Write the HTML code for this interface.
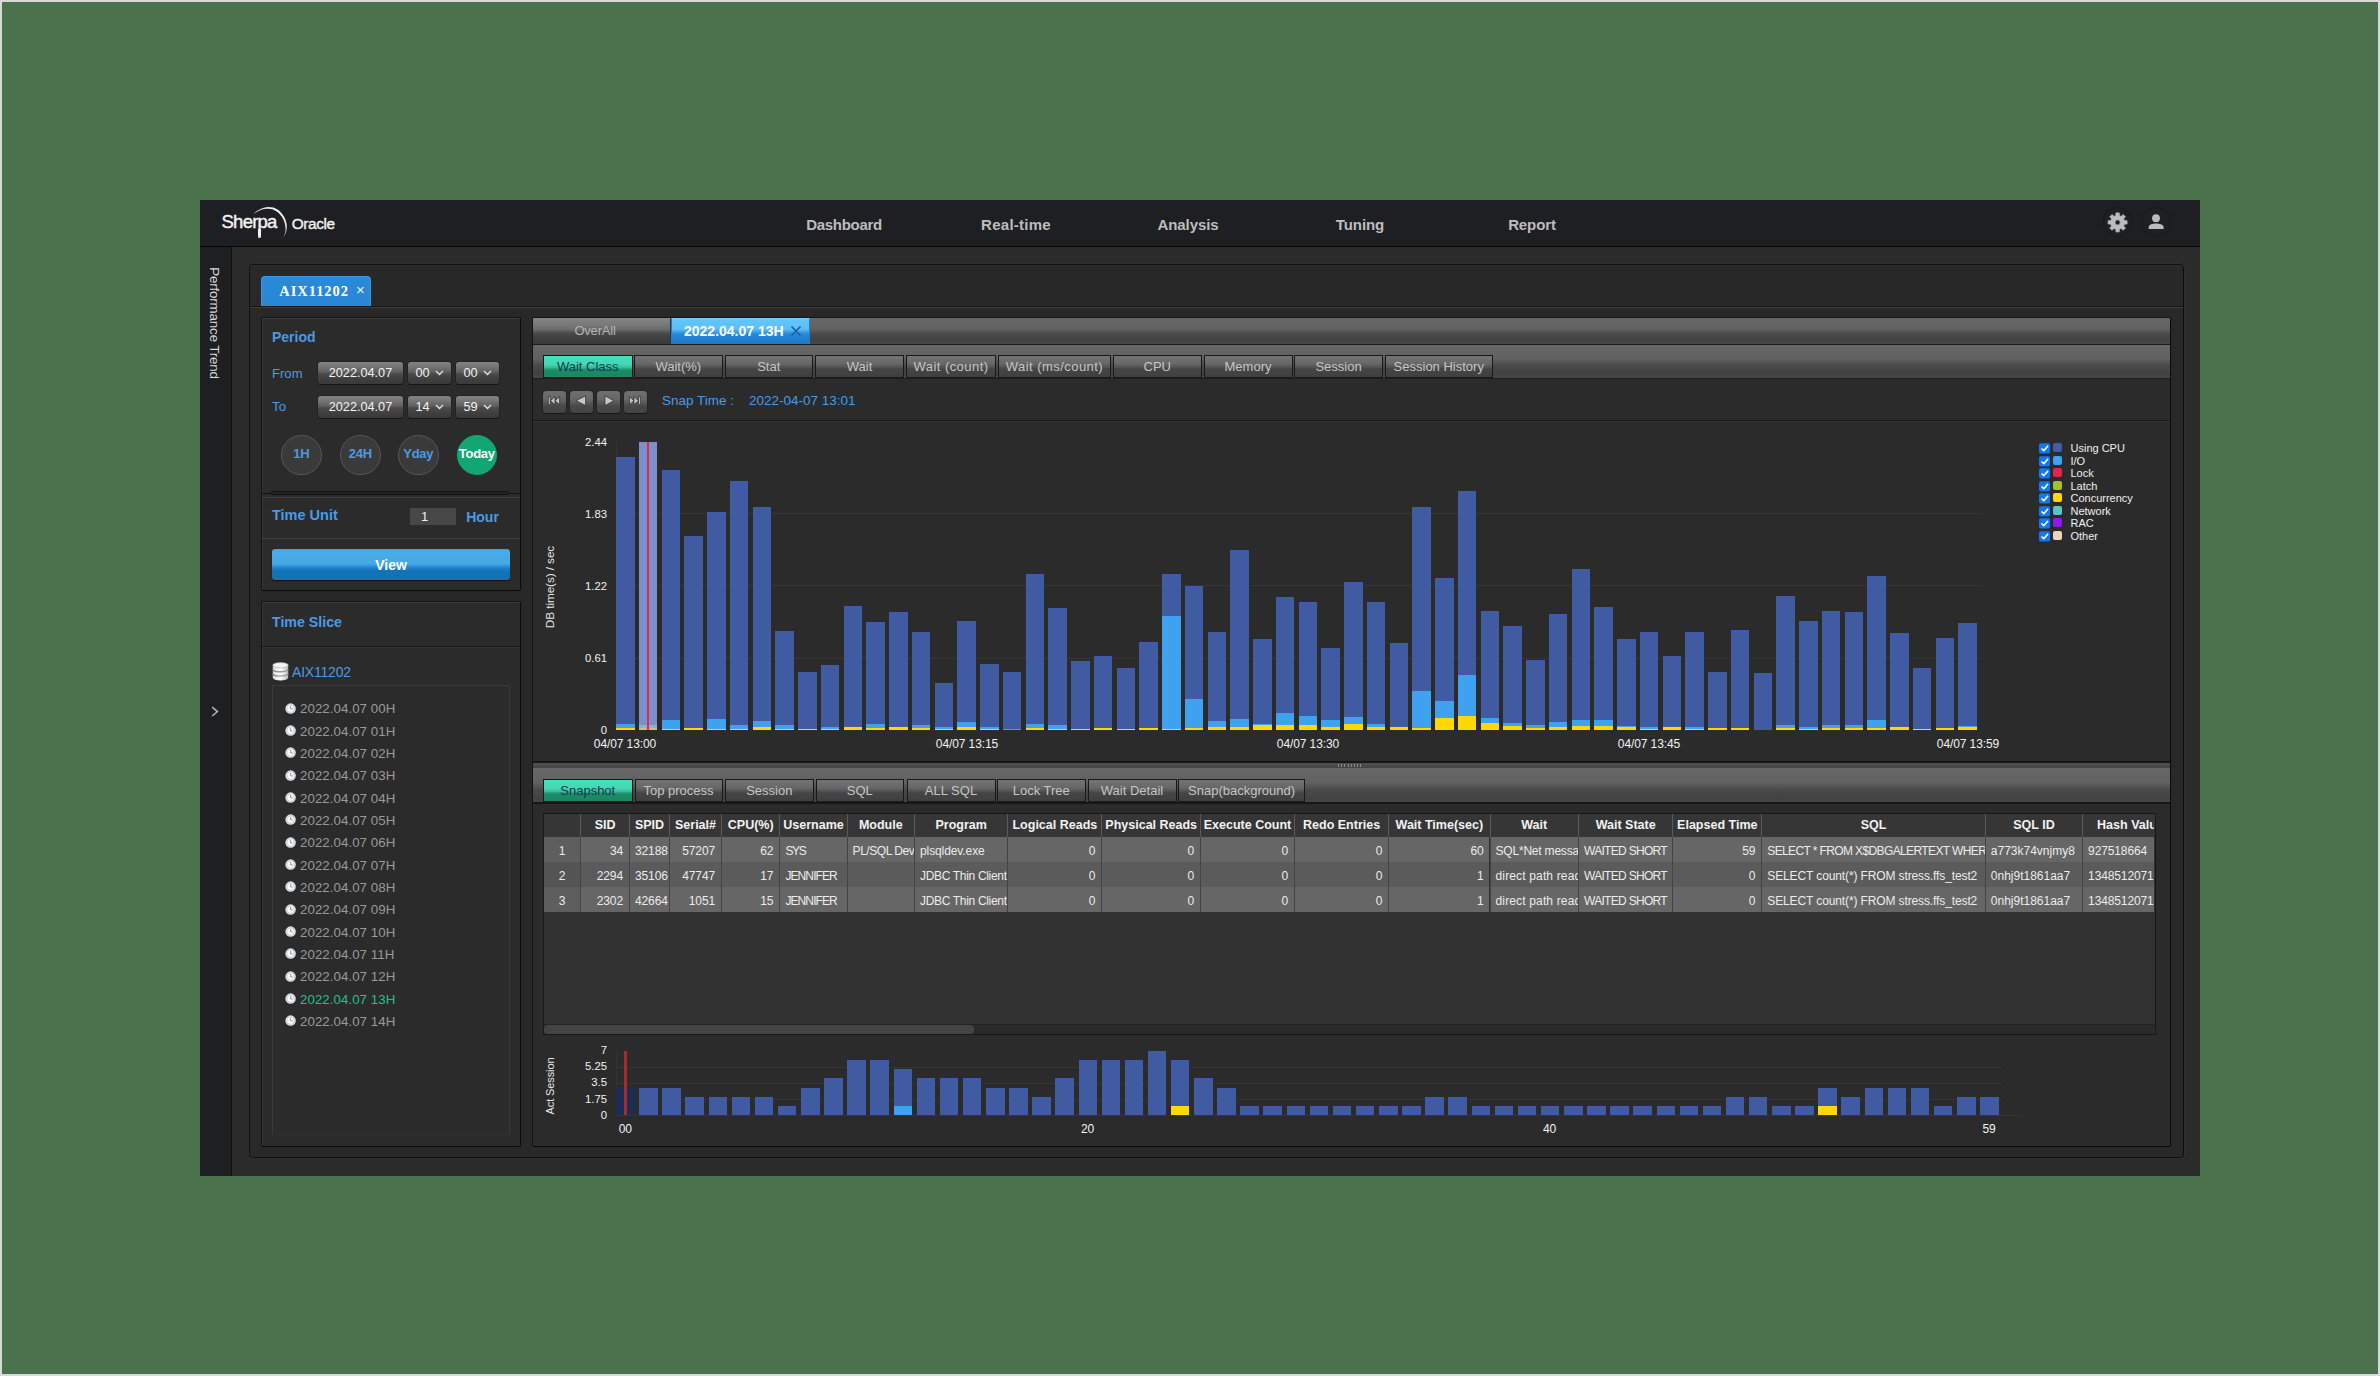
<!DOCTYPE html>
<html><head><meta charset="utf-8"><title>Sherpa Oracle</title>
<style>
html,body{margin:0;padding:0}
body{width:2380px;height:1376px;background:#4a734d;position:relative;overflow:hidden;font-family:"Liberation Sans",sans-serif;font-size:12px;color:#e6e6e6}
div{position:absolute;box-sizing:border-box}
svg{position:absolute;overflow:visible}
.t{white-space:nowrap;height:20px;line-height:20px}
.c{text-align:center}
.r{text-align:right}
.b{font-weight:bold}
.blue{color:#4a9ae6}
.strip{background:linear-gradient(#666 0%,#626262 40%,#4a4a4a 62%,#424242 85%,#474747 100%)}
.tab{border:1px solid #181818;background:linear-gradient(#747474 0%,#686868 35%,#585858 50%,#454545 62%,#404040 100%);color:#c6c6c6;text-align:center;font-size:13px;line-height:21px;white-space:nowrap;overflow:hidden;box-shadow:none}
.tab.on{background:linear-gradient(#46dfbb 0%,#42d8b3 40%,#34bc98 55%,#1d8c68 66%,#1b8664 100%);color:#143a50;box-shadow:none}
.inp{background:linear-gradient(#848484 0%,#727272 25%,#5e5e5e 46%,#4a4a4a 54%,#3e3e3e 80%,#3a3a3a 100%);border:none;border-radius:3px;color:#f4f4f4;font-size:12.7px;line-height:23.6px;text-align:center;box-shadow:0 1px 0 #151515,0 0 0 0.5px #1c1c1c}
.circ{border-radius:50%;background:#3b3a3a;border:1px solid #565656;color:#4a9ae6;font-weight:bold;font-size:13px;text-align:center;line-height:36.4px;letter-spacing:-0.3px}
.th{color:#f2f2f2;font-weight:bold;font-size:12.5px;text-align:center;line-height:22px;white-space:nowrap;overflow:hidden;border-left:1px solid #5a5a5a;height:23px}
.td{color:#ececec;font-size:12px;line-height:28.5px;white-space:nowrap;overflow:hidden;height:25px;border-left:1px solid #444}
.li{color:#9a9a9a;font-size:13.3px;letter-spacing:0.05px;margin-top:0.7px}
</style></head><body>

<div style="left:0px;top:0px;width:2380px;height:1376px;border:2px solid #d9d9d9;border-right-width:2px;border-bottom-width:2px"></div>
<div style="left:200px;top:200px;width:2000px;height:976px;background:#2b2b2b"></div>
<div style="left:200px;top:200px;width:2000px;height:46px;background:#1e1f23"></div>
<div style="left:200px;top:246px;width:2000px;height:1.3px;background:#050505"></div>
<div style="left:200px;top:247px;width:31px;height:929px;background:#1e1f23"></div>
<div style="left:231px;top:247px;width:1px;height:929px;background:#0e0e0e"></div>
<div class="t" style="left:221.5px;top:212.5px;font-size:18.5px;letter-spacing:-0.75px;color:#f4f4f2;-webkit-text-stroke:0.4px #f4f4f2;height:30px;line-height:30px;top:207px">Sherpa</div>
<div class="t" style="left:291.7px;top:213.5px;font-size:15.4px;letter-spacing:-0.4px;color:#f4f4f2;-webkit-text-stroke:0.35px #f4f4f2;height:30px;line-height:30px;top:209px">Oracle</div>
<svg style="left:240px;top:200px" width="60" height="46" viewBox="240 200 60 46"><defs><linearGradient id="lg" x1="0" y1="0" x2="1" y2="1"><stop offset="0" stop-color="#bdbdbd"/><stop offset="0.45" stop-color="#ffffff"/><stop offset="0.8" stop-color="#e8e8e8"/><stop offset="1" stop-color="#777"/></linearGradient></defs><path d="M253 214.6 C259 207.5 270 204.3 277.5 209.5 C286 215.5 290.5 228 283.2 237.8 C288.3 228 284.5 217 276.5 211.3 C269.5 206.6 259.5 209 253 214.6 Z" fill="url(#lg)"/></svg>
<div style="left:258px;top:229px;width:2.9px;height:9.3px;background:linear-gradient(#f4f4f2 70%,#c8c8c6);border-radius:0 0 1px 1px"></div>
<div class="t c" style="left:694px;top:214.5px;width:300px;font-weight:bold;font-size:15px;color:#bdbdbd;letter-spacing:-0.3px">Dashboard</div>
<div class="t c" style="left:866px;top:214.5px;width:300px;font-weight:bold;font-size:15px;color:#bdbdbd;letter-spacing:0.25px">Real-time</div>
<div class="t c" style="left:1038px;top:214.5px;width:300px;font-weight:bold;font-size:15px;color:#bdbdbd;letter-spacing:-0.1px">Analysis</div>
<div class="t c" style="left:1210px;top:214.5px;width:300px;font-weight:bold;font-size:15px;color:#bdbdbd;letter-spacing:-0.1px">Tuning</div>
<div class="t c" style="left:1382px;top:214.5px;width:300px;font-weight:bold;font-size:15px;color:#bdbdbd;letter-spacing:-0.1px">Report</div>
<svg style="left:2095px;top:200px" width="90" height="46" viewBox="2095 200 90 46"><circle cx="2117.5" cy="222" r="14.5" fill="none" stroke="#1a1b1e" stroke-width="1.2"/><circle cx="2156" cy="222" r="14.5" fill="none" stroke="#1a1b1e" stroke-width="1.2"/><path d="M2115.95 212.94 L2119.25 212.94 L2119.23 215.59 L2121.26 216.43 L2123.12 214.55 L2125.45 216.88 L2123.57 218.74 L2124.41 220.77 L2127.06 220.75 L2127.06 224.05 L2124.41 224.03 L2123.57 226.06 L2125.45 227.92 L2123.12 230.25 L2121.26 228.37 L2119.23 229.21 L2119.25 231.86 L2115.95 231.86 L2115.97 229.21 L2113.94 228.37 L2112.08 230.25 L2109.75 227.92 L2111.63 226.06 L2110.79 224.03 L2108.14 224.05 L2108.14 220.75 L2110.79 220.77 L2111.63 218.74 L2109.75 216.88 L2112.08 214.55 L2113.94 216.43 L2115.97 215.59 Z M2115.00 222.40 a2.6 2.6 0 1 0 5.2 0 a2.6 2.6 0 1 0 -5.2 0 Z" fill="#b9bdbb" fill-rule="evenodd" stroke="#b9bdbb" stroke-width="0.8" stroke-linejoin="round"/><circle cx="2156" cy="218.2" r="3.9" fill="#b9bdbb"/><path d="M2148.7 229 L2148.7 227.4 C2148.7 224.6 2153 223.6 2156 223.6 C2159 223.6 2163.6 224.6 2163.6 227.4 L2163.6 229 Z" fill="#b9bdbb"/></svg>
<div class="t" style="left:114px;top:313px;width:200px;text-align:center;transform:rotate(90deg);font-size:13.4px;color:#d8d8d8;letter-spacing:-0.18px">Performance Trend</div>
<svg style="left:210px;top:704px" width="12" height="16" viewBox="0 0 12 16"><path d="M2.2 3.2 L7.4 7.6 L2.2 12" fill="none" stroke="#b0b0b0" stroke-width="1.6"/></svg>
<div style="left:249px;top:264px;width:1935px;height:894px;background:#282828;border:1px solid #0f0f0f;border-radius:3.5px;box-shadow:0 0 0 1px #2f2f2f,inset 0 1px 0 #2e2e2e"></div>
<div style="left:261px;top:275.6px;width:110px;height:30.4px;background:linear-gradient(#2b8ad8,#2886d4);border-radius:4px 4px 0 0;border:1px solid #3a9aea;border-bottom:none"></div>
<div class="t" style="left:279.3px;top:281.3px;font-family:'Liberation Serif',serif;font-weight:bold;font-size:14.5px;color:#fff;letter-spacing:0.95px">AIX11202</div>
<div class="t" style="left:356px;top:280px;font-size:15px;color:#e8f2fc">&#215;</div>
<div style="left:250px;top:306px;width:1933px;height:1px;background:#161616"></div>
<div style="left:250px;top:307px;width:1933px;height:1px;background:#3c3c3c"></div>
<div style="left:261px;top:317.4px;width:260px;height:273.6px;background:#2b2b2b;border:1px solid #141414;border-bottom-color:#090909;border-right-color:#0b0b0b;border-radius:2px;box-shadow:inset 0 1px 0 #3d3d3d,inset 1px 0 0 #343434"></div>
<div class="t" style="left:272px;top:327px;font-weight:bold;font-size:14px;color:#4a9ae6">Period</div>
<div class="t" style="left:272px;top:363.5px;font-size:13.1px;color:#4a9ae6">From</div>
<div class="t" style="left:272px;top:397px;font-size:13.3px;color:#4a9ae6">To</div>
<div class="inp" style="left:318.3px;top:362.1px;width:84.4px;height:22.4px;">2022.04.07</div>
<div class="inp" style="left:407.8px;top:362.1px;width:43px;height:22.4px;text-align:left;padding-left:7.6px">00</div>
<svg style="left:435.3px;top:370.40000000000003px" width="9" height="6" viewBox="0 0 9 6"><path d="M1 1 L4.5 4.5 L8 1" fill="none" stroke="#e0e0e0" stroke-width="1.4"/></svg>
<div class="inp" style="left:455.9px;top:362.1px;width:43px;height:22.4px;text-align:left;padding-left:7.6px">00</div>
<svg style="left:483.4px;top:370.40000000000003px" width="9" height="6" viewBox="0 0 9 6"><path d="M1 1 L4.5 4.5 L8 1" fill="none" stroke="#e0e0e0" stroke-width="1.4"/></svg>
<div class="inp" style="left:318.3px;top:395.6px;width:84.4px;height:22.4px;">2022.04.07</div>
<div class="inp" style="left:407.8px;top:395.6px;width:43px;height:22.4px;text-align:left;padding-left:7.6px">14</div>
<svg style="left:435.3px;top:403.90000000000003px" width="9" height="6" viewBox="0 0 9 6"><path d="M1 1 L4.5 4.5 L8 1" fill="none" stroke="#e0e0e0" stroke-width="1.4"/></svg>
<div class="inp" style="left:455.9px;top:395.6px;width:43px;height:22.4px;text-align:left;padding-left:7.6px">59</div>
<svg style="left:483.4px;top:403.90000000000003px" width="9" height="6" viewBox="0 0 9 6"><path d="M1 1 L4.5 4.5 L8 1" fill="none" stroke="#e0e0e0" stroke-width="1.4"/></svg>
<div class="circ" style="left:281px;top:434.5px;width:40.5px;height:40.5px;">1H</div>
<div class="circ" style="left:340px;top:434.5px;width:40.5px;height:40.5px;">24H</div>
<div class="circ" style="left:398px;top:434.5px;width:40.5px;height:40.5px;">Yday</div>
<div class="circ" style="left:456.5px;top:434.5px;width:40.5px;height:40.5px;background:#11a672;border-color:#11a672;color:#fff">Today</div>
<div style="left:262px;top:493px;width:258px;height:1px;background:#141414"></div>
<div style="left:262px;top:496.6px;width:258px;height:1px;background:#3d3d3d"></div>
<div style="left:270.5px;top:490.8px;width:238px;height:4.6px;border-radius:2.3px;background:#242424;border:1px solid #121212"></div>
<div class="t" style="left:272px;top:505px;font-weight:bold;font-size:14.5px;color:#4a9ae6">Time Unit</div>
<div style="left:410px;top:508px;width:45.5px;height:17px;background:#474747"></div>
<div class="t" style="left:421px;top:506.5px;font-size:13px;color:#f0f0f0">1</div>
<div class="t" style="left:466.2px;top:506.5px;font-weight:bold;font-size:14px;color:#4a9ae6">Hour</div>
<div style="left:262px;top:538px;width:258px;height:1px;background:#414141"></div>
<div style="left:272px;top:548.5px;width:238px;height:31px;border-radius:3px;background:linear-gradient(#3a9fe2 0%,#47ade9 6%,#45a9e6 48%,#2b8fd8 56%,#1a7cc6 64%,#1272b6 72%,#1272b6 93%,#2a6cb0 100%);box-shadow:0 1px 1px #111"></div>
<div class="t c" style="left:241px;top:554.5px;width:300px;font-weight:bold;font-size:14px;color:#fff">View</div>
<div style="left:261px;top:601.4px;width:260px;height:545.6px;background:#2b2b2b;border:1px solid #141414;border-bottom-color:#090909;border-right-color:#0b0b0b;border-radius:2px;box-shadow:inset 0 1px 0 #3d3d3d,inset 1px 0 0 #343434"></div>
<div class="t" style="left:272px;top:611.5px;font-weight:bold;font-size:14.2px;color:#4a9ae6">Time Slice</div>
<div style="left:262px;top:646px;width:258px;height:1px;background:#161616"></div>
<div style="left:262px;top:647px;width:258px;height:1px;background:#363636"></div>
<svg style="left:272px;top:662px" width="17" height="19" viewBox="0 0 17 19"><defs><linearGradient id="dbg" x1="0" x2="1"><stop offset="0" stop-color="#d8d8d8"/><stop offset="0.5" stop-color="#ffffff"/><stop offset="1" stop-color="#b8b8b8"/></linearGradient></defs><path d="M0.8 3.2 L0.8 15.8 A7.7 2.6 0 0 0 16.2 15.8 L16.2 3.2 Z" fill="url(#dbg)"/><ellipse cx="8.5" cy="3.2" rx="7.7" ry="2.6" fill="#f4f4f4" stroke="#a8a8a8" stroke-width="0.6"/><path d="M0.8 7.2 A7.7 2.6 0 0 0 16.2 7.2 M0.8 11.4 A7.7 2.6 0 0 0 16.2 11.4" fill="none" stroke="#7d7d7d" stroke-width="1.2"/></svg>
<div class="t" style="left:292px;top:662px;font-size:14px;color:#4a9ae6;letter-spacing:-0.2px">AIX11202</div>
<div style="left:272px;top:685px;width:238px;height:450px;border:1px solid #3a3a3a;border-bottom-color:#2e2e2e"></div>
<svg style="left:284.6px;top:702.6px" width="11.2" height="11.2" viewBox="0 0 12 12"><circle cx="6" cy="6" r="5.6" fill="#dfe3e6"/><circle cx="6" cy="6" r="4.1" fill="#f7f9fa" stroke="#b4bcc2" stroke-width="0.7"/><path d="M6 3.2 L6 6.3 L8.4 6.3" fill="none" stroke="#8a949c" stroke-width="1"/></svg>
<div class="t li" style="left:300px;top:698.6px;">2022.04.07 00H</div>
<svg style="left:284.6px;top:724.9px" width="11.2" height="11.2" viewBox="0 0 12 12"><circle cx="6" cy="6" r="5.6" fill="#dfe3e6"/><circle cx="6" cy="6" r="4.1" fill="#f7f9fa" stroke="#b4bcc2" stroke-width="0.7"/><path d="M6 3.2 L6 6.3 L8.4 6.3" fill="none" stroke="#8a949c" stroke-width="1"/></svg>
<div class="t li" style="left:300px;top:720.9px;">2022.04.07 01H</div>
<svg style="left:284.6px;top:747.3px" width="11.2" height="11.2" viewBox="0 0 12 12"><circle cx="6" cy="6" r="5.6" fill="#dfe3e6"/><circle cx="6" cy="6" r="4.1" fill="#f7f9fa" stroke="#b4bcc2" stroke-width="0.7"/><path d="M6 3.2 L6 6.3 L8.4 6.3" fill="none" stroke="#8a949c" stroke-width="1"/></svg>
<div class="t li" style="left:300px;top:743.3px;">2022.04.07 02H</div>
<svg style="left:284.6px;top:769.6px" width="11.2" height="11.2" viewBox="0 0 12 12"><circle cx="6" cy="6" r="5.6" fill="#dfe3e6"/><circle cx="6" cy="6" r="4.1" fill="#f7f9fa" stroke="#b4bcc2" stroke-width="0.7"/><path d="M6 3.2 L6 6.3 L8.4 6.3" fill="none" stroke="#8a949c" stroke-width="1"/></svg>
<div class="t li" style="left:300px;top:765.6px;">2022.04.07 03H</div>
<svg style="left:284.6px;top:792.0px" width="11.2" height="11.2" viewBox="0 0 12 12"><circle cx="6" cy="6" r="5.6" fill="#dfe3e6"/><circle cx="6" cy="6" r="4.1" fill="#f7f9fa" stroke="#b4bcc2" stroke-width="0.7"/><path d="M6 3.2 L6 6.3 L8.4 6.3" fill="none" stroke="#8a949c" stroke-width="1"/></svg>
<div class="t li" style="left:300px;top:788.0px;">2022.04.07 04H</div>
<svg style="left:284.6px;top:814.3px" width="11.2" height="11.2" viewBox="0 0 12 12"><circle cx="6" cy="6" r="5.6" fill="#dfe3e6"/><circle cx="6" cy="6" r="4.1" fill="#f7f9fa" stroke="#b4bcc2" stroke-width="0.7"/><path d="M6 3.2 L6 6.3 L8.4 6.3" fill="none" stroke="#8a949c" stroke-width="1"/></svg>
<div class="t li" style="left:300px;top:810.3px;">2022.04.07 05H</div>
<svg style="left:284.6px;top:836.6px" width="11.2" height="11.2" viewBox="0 0 12 12"><circle cx="6" cy="6" r="5.6" fill="#dfe3e6"/><circle cx="6" cy="6" r="4.1" fill="#f7f9fa" stroke="#b4bcc2" stroke-width="0.7"/><path d="M6 3.2 L6 6.3 L8.4 6.3" fill="none" stroke="#8a949c" stroke-width="1"/></svg>
<div class="t li" style="left:300px;top:832.6px;">2022.04.07 06H</div>
<svg style="left:284.6px;top:859.0px" width="11.2" height="11.2" viewBox="0 0 12 12"><circle cx="6" cy="6" r="5.6" fill="#dfe3e6"/><circle cx="6" cy="6" r="4.1" fill="#f7f9fa" stroke="#b4bcc2" stroke-width="0.7"/><path d="M6 3.2 L6 6.3 L8.4 6.3" fill="none" stroke="#8a949c" stroke-width="1"/></svg>
<div class="t li" style="left:300px;top:855.0px;">2022.04.07 07H</div>
<svg style="left:284.6px;top:881.3px" width="11.2" height="11.2" viewBox="0 0 12 12"><circle cx="6" cy="6" r="5.6" fill="#dfe3e6"/><circle cx="6" cy="6" r="4.1" fill="#f7f9fa" stroke="#b4bcc2" stroke-width="0.7"/><path d="M6 3.2 L6 6.3 L8.4 6.3" fill="none" stroke="#8a949c" stroke-width="1"/></svg>
<div class="t li" style="left:300px;top:877.3px;">2022.04.07 08H</div>
<svg style="left:284.6px;top:903.7px" width="11.2" height="11.2" viewBox="0 0 12 12"><circle cx="6" cy="6" r="5.6" fill="#dfe3e6"/><circle cx="6" cy="6" r="4.1" fill="#f7f9fa" stroke="#b4bcc2" stroke-width="0.7"/><path d="M6 3.2 L6 6.3 L8.4 6.3" fill="none" stroke="#8a949c" stroke-width="1"/></svg>
<div class="t li" style="left:300px;top:899.7px;">2022.04.07 09H</div>
<svg style="left:284.6px;top:926.0px" width="11.2" height="11.2" viewBox="0 0 12 12"><circle cx="6" cy="6" r="5.6" fill="#dfe3e6"/><circle cx="6" cy="6" r="4.1" fill="#f7f9fa" stroke="#b4bcc2" stroke-width="0.7"/><path d="M6 3.2 L6 6.3 L8.4 6.3" fill="none" stroke="#8a949c" stroke-width="1"/></svg>
<div class="t li" style="left:300px;top:922.0px;">2022.04.07 10H</div>
<svg style="left:284.6px;top:948.3px" width="11.2" height="11.2" viewBox="0 0 12 12"><circle cx="6" cy="6" r="5.6" fill="#dfe3e6"/><circle cx="6" cy="6" r="4.1" fill="#f7f9fa" stroke="#b4bcc2" stroke-width="0.7"/><path d="M6 3.2 L6 6.3 L8.4 6.3" fill="none" stroke="#8a949c" stroke-width="1"/></svg>
<div class="t li" style="left:300px;top:944.3px;">2022.04.07 11H</div>
<svg style="left:284.6px;top:970.7px" width="11.2" height="11.2" viewBox="0 0 12 12"><circle cx="6" cy="6" r="5.6" fill="#dfe3e6"/><circle cx="6" cy="6" r="4.1" fill="#f7f9fa" stroke="#b4bcc2" stroke-width="0.7"/><path d="M6 3.2 L6 6.3 L8.4 6.3" fill="none" stroke="#8a949c" stroke-width="1"/></svg>
<div class="t li" style="left:300px;top:966.7px;">2022.04.07 12H</div>
<svg style="left:284.6px;top:993.0px" width="11.2" height="11.2" viewBox="0 0 12 12"><circle cx="6" cy="6" r="5.6" fill="#dfe3e6"/><circle cx="6" cy="6" r="4.1" fill="#f7f9fa" stroke="#b4bcc2" stroke-width="0.7"/><path d="M6 3.2 L6 6.3 L8.4 6.3" fill="none" stroke="#8a949c" stroke-width="1"/></svg>
<div class="t li" style="left:300px;top:989.0px;color:#20c18c;">2022.04.07 13H</div>
<svg style="left:284.6px;top:1015.4px" width="11.2" height="11.2" viewBox="0 0 12 12"><circle cx="6" cy="6" r="5.6" fill="#dfe3e6"/><circle cx="6" cy="6" r="4.1" fill="#f7f9fa" stroke="#b4bcc2" stroke-width="0.7"/><path d="M6 3.2 L6 6.3 L8.4 6.3" fill="none" stroke="#8a949c" stroke-width="1"/></svg>
<div class="t li" style="left:300px;top:1011.4px;">2022.04.07 14H</div>
<div style="left:532px;top:317px;width:1639px;height:830px;background:#2b2b2b;border:1px solid #131313;border-bottom-color:#080808;border-right-color:#0b0b0b;border-radius:2px"></div>
<div class="strip" style="left:533px;top:318px;width:1637px;height:26px;"></div>
<div style="left:533px;top:318px;width:138px;height:25.5px;background:linear-gradient(#848484 0%,#787878 28%,#686868 46%,#4a4a4a 58%,#3e3e3e 80%,#3a3a3a 100%);border-right:1px solid #333"></div>
<div class="t c" style="left:445px;top:321px;width:300px;font-size:13px;color:#b4b4b4;letter-spacing:-0.2px">OverAll</div>
<div style="left:671px;top:318px;width:138.5px;height:25.5px;background:linear-gradient(#64c6fb 0%,#5cbff7 40%,#3b9fe6 52%,#2487d8 62%,#1b79c8 100%);border:1px solid #2a7cc4;border-top-color:#7fd0ff;border-bottom:none"></div>
<div class="t" style="left:684px;top:321px;font-weight:bold;font-size:14px;color:#fff;letter-spacing:0px">2022.04.07 13H</div>
<svg style="left:790px;top:325px" width="12" height="12" viewBox="0 0 12 12"><path d="M1.5 1.5 L10.5 10.5 M10.5 1.5 L1.5 10.5" stroke="#1d5f9c" stroke-width="1.7" fill="none"/></svg>
<div style="left:533px;top:344px;width:1637px;height:1px;background:#1c1c1c"></div>
<div class="strip" style="left:533px;top:345px;width:1637px;height:33px;"></div>
<div style="left:533px;top:378px;width:1637px;height:1px;background:#1c1c1c"></div>
<div class="tab on" style="left:543px;top:355px;width:89.5px;height:23px;">Wait Class</div>
<div class="tab" style="left:634px;top:355px;width:88.5px;height:23px;">Wait(%)</div>
<div class="tab" style="left:724.5px;top:355px;width:88.5px;height:23px;">Stat</div>
<div class="tab" style="left:815px;top:355px;width:89px;height:23px;">Wait</div>
<div class="tab" style="left:906px;top:355px;width:90px;height:23px;letter-spacing:0.45px">Wait (count)</div>
<div class="tab" style="left:998px;top:355px;width:113px;height:23px;letter-spacing:0.45px">Wait (ms/count)</div>
<div class="tab" style="left:1113px;top:355px;width:88.5px;height:23px;">CPU</div>
<div class="tab" style="left:1203.5px;top:355px;width:89px;height:23px;">Memory</div>
<div class="tab" style="left:1294px;top:355px;width:89px;height:23px;">Session</div>
<div class="tab" style="left:1385px;top:355px;width:107.5px;height:23px;">Session History</div>
<div style="left:543.0px;top:390.5px;width:22.6px;height:22.6px;border:none;border-radius:3.5px;background:linear-gradient(#707070 0%,#666 40%,#565656 55%,#484848 70%,#444 100%);box-shadow:0 1px 0 #161616,0 0 0 0.5px #1e1e1e"><svg style="left:0;top:-0.5px" width="22" height="22" viewBox="0 0 22 22"><path d="M5.3 6.7 L7.3 6.7 L7.3 14.7 L5.3 14.7 Z M7.4 10.7 L12 6.7 L12 14.7 Z M12 10.7 L16.6 6.7 L16.6 14.7 Z" fill="#c6c6c6" stroke="#262626" stroke-width="0.7"/></svg></div>
<div style="left:570.0px;top:390.5px;width:22.6px;height:22.6px;border:none;border-radius:3.5px;background:linear-gradient(#707070 0%,#666 40%,#565656 55%,#484848 70%,#444 100%);box-shadow:0 1px 0 #161616,0 0 0 0.5px #1e1e1e"><svg style="left:0;top:-0.5px" width="22" height="22" viewBox="0 0 22 22"><path d="M6 10.7 L15.6 5.8 L15.6 15.6 Z" fill="#c6c6c6" stroke="#262626" stroke-width="0.7"/></svg></div>
<div style="left:597.1px;top:390.5px;width:22.6px;height:22.6px;border:none;border-radius:3.5px;background:linear-gradient(#707070 0%,#666 40%,#565656 55%,#484848 70%,#444 100%);box-shadow:0 1px 0 #161616,0 0 0 0.5px #1e1e1e"><svg style="left:0;top:-0.5px" width="22" height="22" viewBox="0 0 22 22"><path d="M16.8 10.7 L8 5.8 L8 15.6 Z" fill="#c6c6c6" stroke="#262626" stroke-width="0.7"/></svg></div>
<div style="left:624.1px;top:390.5px;width:22.6px;height:22.6px;border:none;border-radius:3.5px;background:linear-gradient(#707070 0%,#666 40%,#565656 55%,#484848 70%,#444 100%);box-shadow:0 1px 0 #161616,0 0 0 0.5px #1e1e1e"><svg style="left:0;top:-0.5px" width="22" height="22" viewBox="0 0 22 22"><path d="M16.6 6.7 L14.6 6.7 L14.6 14.7 L16.6 14.7 Z M14.5 10.7 L10 6.7 L10 14.7 Z M10 10.7 L5.6 6.7 L5.6 14.7 Z" fill="#c6c6c6" stroke="#262626" stroke-width="0.7"/></svg></div>
<div class="t" style="left:662px;top:390.5px;font-size:13.5px;color:#4a9ae6">Snap Time :</div>
<div class="t" style="left:749px;top:390.5px;font-size:13.5px;color:#4a9ae6">2022-04-07 13:01</div>
<div style="left:533px;top:420px;width:1637px;height:1px;background:#161616"></div>
<div style="left:533px;top:421px;width:1637px;height:1px;background:#333"></div>
<svg style="left:533px;top:422px" width="1637" height="340" viewBox="533 422 1637 340" shape-rendering="crispEdges"><rect x="616" y="513.3" width="1366" height="1" fill="#353535"/><rect x="616" y="585.4" width="1366" height="1" fill="#353535"/><rect x="616" y="657.5" width="1366" height="1" fill="#353535"/><rect x="616" y="441" width="1" height="289" fill="#333"/><rect x="616.20" y="457.0" width="18.3" height="272.6" fill="#405ba2"/><rect x="616.20" y="724.0" width="18.3" height="5.6" fill="#3ea2f0"/><rect x="616.20" y="727.6" width="18.3" height="2.0" fill="#ffd800"/><rect x="638.95" y="441.7" width="18.3" height="287.9" fill="#7b90ca"/><rect x="638.95" y="725.2" width="18.3" height="2.4" fill="#86b4d8"/><rect x="638.95" y="727.6" width="18.3" height="2" fill="#d8b48c"/><rect x="647.10" y="441.7" width="1.7" height="287.9" fill="#e0284c"/><rect x="661.70" y="470.1" width="18.3" height="259.5" fill="#405ba2"/><rect x="661.70" y="719.9" width="18.3" height="9.7" fill="#3ea2f0"/><rect x="661.70" y="728.7" width="18.3" height="0.9" fill="#ffd800"/><rect x="684.45" y="536.1" width="18.3" height="193.5" fill="#405ba2"/><rect x="684.45" y="728.2" width="18.3" height="1.4" fill="#ffd800"/><rect x="707.20" y="511.5" width="18.3" height="218.1" fill="#405ba2"/><rect x="707.20" y="718.8" width="18.3" height="10.8" fill="#3ea2f0"/><rect x="707.20" y="728.7" width="18.3" height="0.9" fill="#ffd800"/><rect x="729.95" y="480.7" width="18.3" height="248.9" fill="#405ba2"/><rect x="729.95" y="724.9" width="18.3" height="4.7" fill="#3ea2f0"/><rect x="729.95" y="728.7" width="18.3" height="0.9" fill="#ffd800"/><rect x="752.70" y="506.6" width="18.3" height="223.0" fill="#405ba2"/><rect x="752.70" y="721.0" width="18.3" height="8.6" fill="#3ea2f0"/><rect x="752.70" y="726.7" width="18.3" height="2.9" fill="#ffd800"/><rect x="775.45" y="630.5" width="18.3" height="99.1" fill="#405ba2"/><rect x="775.45" y="724.9" width="18.3" height="4.7" fill="#3ea2f0"/><rect x="775.45" y="728.7" width="18.3" height="0.9" fill="#ffd800"/><rect x="798.20" y="671.7" width="18.3" height="57.9" fill="#405ba2"/><rect x="798.20" y="728.7" width="18.3" height="0.9" fill="#ffd800"/><rect x="820.95" y="664.7" width="18.3" height="64.9" fill="#405ba2"/><rect x="820.95" y="727.4" width="18.3" height="2.2" fill="#3ea2f0"/><rect x="820.95" y="728.7" width="18.3" height="0.9" fill="#ffd800"/><rect x="843.70" y="605.7" width="18.3" height="123.9" fill="#405ba2"/><rect x="843.70" y="727.4" width="18.3" height="2.2" fill="#ffd800"/><rect x="866.45" y="621.9" width="18.3" height="107.7" fill="#405ba2"/><rect x="866.45" y="723.8" width="18.3" height="5.8" fill="#3ea2f0"/><rect x="866.45" y="727.6" width="18.3" height="2.0" fill="#ffd800"/><rect x="889.20" y="611.8" width="18.3" height="117.8" fill="#405ba2"/><rect x="889.20" y="727.4" width="18.3" height="2.2" fill="#ffd800"/><rect x="911.95" y="631.6" width="18.3" height="98.0" fill="#405ba2"/><rect x="911.95" y="724.9" width="18.3" height="4.7" fill="#3ea2f0"/><rect x="911.95" y="727.6" width="18.3" height="2.0" fill="#ffd800"/><rect x="934.70" y="682.5" width="18.3" height="47.1" fill="#405ba2"/><rect x="934.70" y="727.4" width="18.3" height="2.2" fill="#3ea2f0"/><rect x="934.70" y="728.7" width="18.3" height="0.9" fill="#ffd800"/><rect x="957.45" y="620.8" width="18.3" height="108.8" fill="#405ba2"/><rect x="957.45" y="722.4" width="18.3" height="7.2" fill="#3ea2f0"/><rect x="957.45" y="726.7" width="18.3" height="2.9" fill="#ffd800"/><rect x="980.20" y="663.6" width="18.3" height="66.0" fill="#405ba2"/><rect x="980.20" y="727.4" width="18.3" height="2.2" fill="#3ea2f0"/><rect x="980.20" y="728.7" width="18.3" height="0.9" fill="#ffd800"/><rect x="1002.95" y="671.7" width="18.3" height="57.9" fill="#405ba2"/><rect x="1002.95" y="728.6" width="18.3" height="1.0" fill="#3ea2f0"/><rect x="1025.70" y="573.5" width="18.3" height="156.1" fill="#405ba2"/><rect x="1025.70" y="723.8" width="18.3" height="5.8" fill="#3ea2f0"/><rect x="1025.70" y="727.6" width="18.3" height="2.0" fill="#ffd800"/><rect x="1048.45" y="608.2" width="18.3" height="121.4" fill="#405ba2"/><rect x="1048.45" y="724.9" width="18.3" height="4.7" fill="#3ea2f0"/><rect x="1048.45" y="728.7" width="18.3" height="0.9" fill="#ffd800"/><rect x="1071.20" y="661.1" width="18.3" height="68.5" fill="#405ba2"/><rect x="1071.20" y="728.7" width="18.3" height="0.9" fill="#ffd800"/><rect x="1093.95" y="655.5" width="18.3" height="74.1" fill="#405ba2"/><rect x="1093.95" y="728.4" width="18.3" height="1.2" fill="#ffd800"/><rect x="1116.70" y="668.1" width="18.3" height="61.5" fill="#405ba2"/><rect x="1116.70" y="728.7" width="18.3" height="0.9" fill="#ffd800"/><rect x="1139.45" y="642.0" width="18.3" height="87.6" fill="#405ba2"/><rect x="1139.45" y="727.6" width="18.3" height="2.0" fill="#ffd800"/><rect x="1162.20" y="573.5" width="18.3" height="156.1" fill="#405ba2"/><rect x="1162.20" y="615.6" width="18.3" height="114.0" fill="#3ea2f0"/><rect x="1162.20" y="728.7" width="18.3" height="0.9" fill="#ffd800"/><rect x="1184.95" y="585.9" width="18.3" height="143.7" fill="#405ba2"/><rect x="1184.95" y="699.0" width="18.3" height="30.6" fill="#3ea2f0"/><rect x="1184.95" y="727.8" width="18.3" height="1.8" fill="#ffd800"/><rect x="1207.70" y="631.8" width="18.3" height="97.8" fill="#405ba2"/><rect x="1207.70" y="721.0" width="18.3" height="8.6" fill="#3ea2f0"/><rect x="1207.70" y="726.7" width="18.3" height="2.9" fill="#ffd800"/><rect x="1230.45" y="550.1" width="18.3" height="179.5" fill="#405ba2"/><rect x="1230.45" y="718.8" width="18.3" height="10.8" fill="#3ea2f0"/><rect x="1230.45" y="726.7" width="18.3" height="2.9" fill="#ffd800"/><rect x="1253.20" y="639.1" width="18.3" height="90.5" fill="#405ba2"/><rect x="1253.20" y="724.0" width="18.3" height="5.6" fill="#3ea2f0"/><rect x="1253.20" y="725.1" width="18.3" height="4.5" fill="#ffd800"/><rect x="1275.95" y="597.2" width="18.3" height="132.4" fill="#405ba2"/><rect x="1275.95" y="713.0" width="18.3" height="16.6" fill="#3ea2f0"/><rect x="1275.95" y="725.1" width="18.3" height="4.5" fill="#ffd800"/><rect x="1298.70" y="602.3" width="18.3" height="127.3" fill="#405ba2"/><rect x="1298.70" y="715.9" width="18.3" height="13.7" fill="#3ea2f0"/><rect x="1298.70" y="725.1" width="18.3" height="4.5" fill="#ffd800"/><rect x="1321.45" y="648.1" width="18.3" height="81.5" fill="#405ba2"/><rect x="1321.45" y="719.9" width="18.3" height="9.7" fill="#3ea2f0"/><rect x="1321.45" y="727.4" width="18.3" height="2.2" fill="#ffd800"/><rect x="1344.20" y="582.3" width="18.3" height="147.3" fill="#405ba2"/><rect x="1344.20" y="716.8" width="18.3" height="12.8" fill="#3ea2f0"/><rect x="1344.20" y="723.8" width="18.3" height="5.8" fill="#ffd800"/><rect x="1366.95" y="602.3" width="18.3" height="127.3" fill="#405ba2"/><rect x="1366.95" y="723.8" width="18.3" height="5.8" fill="#3ea2f0"/><rect x="1366.95" y="726.7" width="18.3" height="2.9" fill="#ffd800"/><rect x="1389.70" y="643.1" width="18.3" height="86.5" fill="#405ba2"/><rect x="1389.70" y="727.4" width="18.3" height="2.2" fill="#ffd800"/><rect x="1412.45" y="506.6" width="18.3" height="223.0" fill="#405ba2"/><rect x="1412.45" y="690.9" width="18.3" height="38.7" fill="#3ea2f0"/><rect x="1412.45" y="727.8" width="18.3" height="1.8" fill="#ffd800"/><rect x="1435.20" y="577.6" width="18.3" height="152.0" fill="#405ba2"/><rect x="1435.20" y="701.0" width="18.3" height="28.6" fill="#3ea2f0"/><rect x="1435.20" y="717.7" width="18.3" height="11.9" fill="#ffd800"/><rect x="1457.95" y="491.3" width="18.3" height="238.3" fill="#405ba2"/><rect x="1457.95" y="675.1" width="18.3" height="54.5" fill="#3ea2f0"/><rect x="1457.95" y="715.7" width="18.3" height="13.9" fill="#ffd800"/><rect x="1480.70" y="610.7" width="18.3" height="118.9" fill="#405ba2"/><rect x="1480.70" y="717.9" width="18.3" height="11.7" fill="#3ea2f0"/><rect x="1480.70" y="722.6" width="18.3" height="7.0" fill="#ffd800"/><rect x="1503.45" y="625.8" width="18.3" height="103.8" fill="#405ba2"/><rect x="1503.45" y="722.9" width="18.3" height="6.7" fill="#3ea2f0"/><rect x="1503.45" y="725.6" width="18.3" height="4.0" fill="#ffd800"/><rect x="1526.20" y="660.0" width="18.3" height="69.6" fill="#405ba2"/><rect x="1526.20" y="724.9" width="18.3" height="4.7" fill="#3ea2f0"/><rect x="1526.20" y="727.8" width="18.3" height="1.8" fill="#ffd800"/><rect x="1548.95" y="614.1" width="18.3" height="115.5" fill="#405ba2"/><rect x="1548.95" y="722.4" width="18.3" height="7.2" fill="#3ea2f0"/><rect x="1548.95" y="726.7" width="18.3" height="2.9" fill="#ffd800"/><rect x="1571.70" y="569.0" width="18.3" height="160.6" fill="#405ba2"/><rect x="1571.70" y="719.9" width="18.3" height="9.7" fill="#3ea2f0"/><rect x="1571.70" y="725.6" width="18.3" height="4.0" fill="#ffd800"/><rect x="1594.45" y="607.1" width="18.3" height="122.5" fill="#405ba2"/><rect x="1594.45" y="719.9" width="18.3" height="9.7" fill="#3ea2f0"/><rect x="1594.45" y="725.6" width="18.3" height="4.0" fill="#ffd800"/><rect x="1617.20" y="639.1" width="18.3" height="90.5" fill="#405ba2"/><rect x="1617.20" y="725.6" width="18.3" height="4.0" fill="#3ea2f0"/><rect x="1617.20" y="726.7" width="18.3" height="2.9" fill="#ffd800"/><rect x="1639.95" y="631.8" width="18.3" height="97.8" fill="#405ba2"/><rect x="1639.95" y="726.7" width="18.3" height="2.9" fill="#3ea2f0"/><rect x="1639.95" y="728.7" width="18.3" height="0.9" fill="#ffd800"/><rect x="1662.70" y="655.5" width="18.3" height="74.1" fill="#405ba2"/><rect x="1662.70" y="727.4" width="18.3" height="2.2" fill="#ffd800"/><rect x="1685.45" y="631.8" width="18.3" height="97.8" fill="#405ba2"/><rect x="1685.45" y="727.4" width="18.3" height="2.2" fill="#3ea2f0"/><rect x="1685.45" y="728.5" width="18.3" height="1.1" fill="#ffd800"/><rect x="1708.20" y="671.7" width="18.3" height="57.9" fill="#405ba2"/><rect x="1708.20" y="728.3" width="18.3" height="1.3" fill="#ffd800"/><rect x="1730.95" y="629.6" width="18.3" height="100.0" fill="#405ba2"/><rect x="1730.95" y="728.3" width="18.3" height="1.3" fill="#ffd800"/><rect x="1753.70" y="672.8" width="18.3" height="56.8" fill="#405ba2"/><rect x="1776.45" y="596.3" width="18.3" height="133.3" fill="#405ba2"/><rect x="1776.45" y="724.9" width="18.3" height="4.7" fill="#3ea2f0"/><rect x="1776.45" y="727.6" width="18.3" height="2.0" fill="#ffd800"/><rect x="1799.20" y="621.0" width="18.3" height="108.6" fill="#405ba2"/><rect x="1799.20" y="726.7" width="18.3" height="2.9" fill="#3ea2f0"/><rect x="1799.20" y="728.7" width="18.3" height="0.9" fill="#ffd800"/><rect x="1821.95" y="610.7" width="18.3" height="118.9" fill="#405ba2"/><rect x="1821.95" y="724.9" width="18.3" height="4.7" fill="#3ea2f0"/><rect x="1821.95" y="727.6" width="18.3" height="2.0" fill="#ffd800"/><rect x="1844.70" y="611.8" width="18.3" height="117.8" fill="#405ba2"/><rect x="1844.70" y="724.9" width="18.3" height="4.7" fill="#3ea2f0"/><rect x="1844.70" y="727.6" width="18.3" height="2.0" fill="#ffd800"/><rect x="1867.45" y="576.0" width="18.3" height="153.6" fill="#405ba2"/><rect x="1867.45" y="720.2" width="18.3" height="9.4" fill="#3ea2f0"/><rect x="1867.45" y="727.6" width="18.3" height="2.0" fill="#ffd800"/><rect x="1890.20" y="633.0" width="18.3" height="96.6" fill="#405ba2"/><rect x="1890.20" y="727.4" width="18.3" height="2.2" fill="#ffd800"/><rect x="1912.95" y="668.1" width="18.3" height="61.5" fill="#405ba2"/><rect x="1912.95" y="728.7" width="18.3" height="0.9" fill="#ffd800"/><rect x="1935.70" y="637.7" width="18.3" height="91.9" fill="#405ba2"/><rect x="1935.70" y="728.3" width="18.3" height="1.3" fill="#ffd800"/><rect x="1958.45" y="623.3" width="18.3" height="106.3" fill="#405ba2"/><rect x="1958.45" y="725.6" width="18.3" height="4.0" fill="#3ea2f0"/><rect x="1958.45" y="727.4" width="18.3" height="2.2" fill="#ffd800"/></svg>
<div class="t r" style="left:307px;top:431.5px;width:300px;font-size:11.3px;color:#f2f2f2;letter-spacing:0px">2.44</div>
<div class="t r" style="left:307px;top:503.5px;width:300px;font-size:11.3px;color:#f2f2f2;letter-spacing:0px">1.83</div>
<div class="t r" style="left:307px;top:575.5px;width:300px;font-size:11.3px;color:#f2f2f2;letter-spacing:0px">1.22</div>
<div class="t r" style="left:307px;top:647.5px;width:300px;font-size:11.3px;color:#f2f2f2;letter-spacing:0px">0.61</div>
<div class="t r" style="left:307px;top:719.5px;width:300px;font-size:11.3px;color:#f2f2f2;letter-spacing:0px">0</div>
<div class="t c" style="left:475px;top:733.5px;width:300px;font-size:12px;color:#f2f2f2;letter-spacing:-0.1px">04/07 13:00</div>
<div class="t c" style="left:817px;top:733.5px;width:300px;font-size:12px;color:#f2f2f2;letter-spacing:-0.1px">04/07 13:15</div>
<div class="t c" style="left:1158px;top:733.5px;width:300px;font-size:12px;color:#f2f2f2;letter-spacing:-0.1px">04/07 13:30</div>
<div class="t c" style="left:1499px;top:733.5px;width:300px;font-size:12px;color:#f2f2f2;letter-spacing:-0.1px">04/07 13:45</div>
<div class="t c" style="left:1818px;top:733.5px;width:300px;font-size:12px;color:#f2f2f2;letter-spacing:-0.1px">04/07 13:59</div>
<div class="t c" style="left:450px;top:577px;width:200px;transform:rotate(-90deg);font-size:11.8px;color:#e8e8e8;letter-spacing:-0.1px">DB time(s) / sec</div>
<svg style="left:2038.9px;top:443.0px" width="12" height="11" viewBox="0 0 12 11"><rect x="0" y="0.2" width="11.1" height="10.2" rx="1.6" fill="#0f78f2"/><path d="M2.5 5.5 L4.8 7.7 L9 2.9" fill="none" stroke="#fff" stroke-width="1.6"/></svg>
<div style="left:2053.3px;top:443.0px;width:9px;height:9px;background:#435ca4;border-radius:2px"></div>
<div class="t" style="left:2070.5px;top:438.2px;font-size:11px;color:#f0f0f0;letter-spacing:0px">Using CPU</div>
<svg style="left:2038.9px;top:455.5px" width="12" height="11" viewBox="0 0 12 11"><rect x="0" y="0.2" width="11.1" height="10.2" rx="1.6" fill="#0f78f2"/><path d="M2.5 5.5 L4.8 7.7 L9 2.9" fill="none" stroke="#fff" stroke-width="1.6"/></svg>
<div style="left:2053.3px;top:455.5px;width:9px;height:9px;background:#3ea2f0;border-radius:2px"></div>
<div class="t" style="left:2070.5px;top:450.7px;font-size:11px;color:#f0f0f0;letter-spacing:0px">I/O</div>
<svg style="left:2038.9px;top:468.1px" width="12" height="11" viewBox="0 0 12 11"><rect x="0" y="0.2" width="11.1" height="10.2" rx="1.6" fill="#0f78f2"/><path d="M2.5 5.5 L4.8 7.7 L9 2.9" fill="none" stroke="#fff" stroke-width="1.6"/></svg>
<div style="left:2053.3px;top:468.1px;width:9px;height:9px;background:#dc2850;border-radius:2px"></div>
<div class="t" style="left:2070.5px;top:463.3px;font-size:11px;color:#f0f0f0;letter-spacing:0px">Lock</div>
<svg style="left:2038.9px;top:480.6px" width="12" height="11" viewBox="0 0 12 11"><rect x="0" y="0.2" width="11.1" height="10.2" rx="1.6" fill="#0f78f2"/><path d="M2.5 5.5 L4.8 7.7 L9 2.9" fill="none" stroke="#fff" stroke-width="1.6"/></svg>
<div style="left:2053.3px;top:480.6px;width:9px;height:9px;background:#a4c22e;border-radius:2px"></div>
<div class="t" style="left:2070.5px;top:475.8px;font-size:11px;color:#f0f0f0;letter-spacing:0px">Latch</div>
<svg style="left:2038.9px;top:493.1px" width="12" height="11" viewBox="0 0 12 11"><rect x="0" y="0.2" width="11.1" height="10.2" rx="1.6" fill="#0f78f2"/><path d="M2.5 5.5 L4.8 7.7 L9 2.9" fill="none" stroke="#fff" stroke-width="1.6"/></svg>
<div style="left:2053.3px;top:493.1px;width:9px;height:9px;background:#ffd800;border-radius:2px"></div>
<div class="t" style="left:2070.5px;top:488.3px;font-size:11px;color:#f0f0f0;letter-spacing:0px">Concurrency</div>
<svg style="left:2038.9px;top:505.6px" width="12" height="11" viewBox="0 0 12 11"><rect x="0" y="0.2" width="11.1" height="10.2" rx="1.6" fill="#0f78f2"/><path d="M2.5 5.5 L4.8 7.7 L9 2.9" fill="none" stroke="#fff" stroke-width="1.6"/></svg>
<div style="left:2053.3px;top:505.6px;width:9px;height:9px;background:#5cc4c6;border-radius:2px"></div>
<div class="t" style="left:2070.5px;top:500.8px;font-size:11px;color:#f0f0f0;letter-spacing:0px">Network</div>
<svg style="left:2038.9px;top:518.2px" width="12" height="11" viewBox="0 0 12 11"><rect x="0" y="0.2" width="11.1" height="10.2" rx="1.6" fill="#0f78f2"/><path d="M2.5 5.5 L4.8 7.7 L9 2.9" fill="none" stroke="#fff" stroke-width="1.6"/></svg>
<div style="left:2053.3px;top:518.2px;width:9px;height:9px;background:#8c1af0;border-radius:2px"></div>
<div class="t" style="left:2070.5px;top:513.4px;font-size:11px;color:#f0f0f0;letter-spacing:0px">RAC</div>
<svg style="left:2038.9px;top:530.7px" width="12" height="11" viewBox="0 0 12 11"><rect x="0" y="0.2" width="11.1" height="10.2" rx="1.6" fill="#0f78f2"/><path d="M2.5 5.5 L4.8 7.7 L9 2.9" fill="none" stroke="#fff" stroke-width="1.6"/></svg>
<div style="left:2053.3px;top:530.7px;width:9px;height:9px;background:#ead6ba;border-radius:2px"></div>
<div class="t" style="left:2070.5px;top:525.9px;font-size:11px;color:#f0f0f0;letter-spacing:0px">Other</div>
<div style="left:533px;top:761px;width:1637px;height:2px;background:#171717"></div>
<div style="left:533px;top:763px;width:1637px;height:4.5px;background:linear-gradient(#505050,#444)"></div>
<div style="left:1338.0px;top:764px;width:1px;height:3px;background:#8a8a8a"></div>
<div style="left:1341.2px;top:764px;width:1px;height:3px;background:#8a8a8a"></div>
<div style="left:1344.4px;top:764px;width:1px;height:3px;background:#8a8a8a"></div>
<div style="left:1347.6px;top:764px;width:1px;height:3px;background:#8a8a8a"></div>
<div style="left:1350.8px;top:764px;width:1px;height:3px;background:#8a8a8a"></div>
<div style="left:1354.0px;top:764px;width:1px;height:3px;background:#8a8a8a"></div>
<div style="left:1357.2px;top:764px;width:1px;height:3px;background:#8a8a8a"></div>
<div style="left:1360.4px;top:764px;width:1px;height:3px;background:#8a8a8a"></div>
<div class="strip" style="left:533px;top:767.5px;width:1637px;height:35px;"></div>
<div style="left:533px;top:802px;width:1637px;height:1.5px;background:#171717"></div>
<div class="tab on" style="left:543px;top:779px;width:89.5px;height:23px;">Snapshot</div>
<div class="tab" style="left:634.5px;top:779px;width:88px;height:23px;">Top process</div>
<div class="tab" style="left:725px;top:779px;width:88.5px;height:23px;">Session</div>
<div class="tab" style="left:815.5px;top:779px;width:88.5px;height:23px;">SQL</div>
<div class="tab" style="left:906.5px;top:779px;width:89px;height:23px;">ALL SQL</div>
<div class="tab" style="left:997px;top:779px;width:88.5px;height:23px;">Lock Tree</div>
<div class="tab" style="left:1087.5px;top:779px;width:89px;height:23px;">Wait Detail</div>
<div class="tab" style="left:1178px;top:779px;width:127px;height:23px;">Snap(background)</div>
<div style="left:542.5px;top:813px;width:1613px;height:221.5px;background:#313131;border:1px solid #171717"></div>
<div style="left:543.5px;top:814px;width:1611.0px;height:23px;background:#363636"></div>
<div class="th" style="left:543.5px;top:814px;width:36.9px;height:23px;border-left:none;"></div>
<div class="th" style="left:580.4px;top:814px;width:48.6px;height:23px;">SID</div>
<div class="th" style="left:629px;top:814px;width:40px;height:23px;">SPID</div>
<div class="th" style="left:669px;top:814px;width:52px;height:23px;">Serial#</div>
<div class="th" style="left:721px;top:814px;width:58.4px;height:23px;">CPU(%)</div>
<div class="th" style="left:779.4px;top:814px;width:67.2px;height:23px;">Username</div>
<div class="th" style="left:846.6px;top:814px;width:67.4px;height:23px;">Module</div>
<div class="th" style="left:914px;top:814px;width:93.3px;height:23px;">Program</div>
<div class="th" style="left:1007.3px;top:814px;width:94.1px;height:23px;">Logical Reads</div>
<div class="th" style="left:1101.4px;top:814px;width:98.6px;height:23px;">Physical Reads</div>
<div class="th" style="left:1200px;top:814px;width:94px;height:23px;">Execute Count</div>
<div class="th" style="left:1294px;top:814px;width:94.2px;height:23px;">Redo Entries</div>
<div class="th" style="left:1388.2px;top:814px;width:101.3px;height:23px;">Wait Time(sec)</div>
<div class="th" style="left:1489.5px;top:814px;width:88.5px;height:23px;">Wait</div>
<div class="th" style="left:1578px;top:814px;width:94.3px;height:23px;">Wait State</div>
<div class="th" style="left:1672.3px;top:814px;width:89.0px;height:23px;">Elapsed Time</div>
<div class="th" style="left:1761.3px;top:814px;width:223.5px;height:23px;">SQL</div>
<div class="th" style="left:1984.8px;top:814px;width:97.3px;height:23px;">SQL ID</div>
<div class="th" style="left:2082.1px;top:814px;width:72.4px;height:23px;text-align:left;padding-left:14px;">Hash Value</div>
<div class="td" style="left:543.5px;top:837.3px;width:36.9px;height:25px;background:#5e5e5e;border-left:none;text-align:center;letter-spacing:-0.12px;">1</div>
<div class="td" style="left:580.4px;top:837.3px;width:48.6px;height:25px;background:#666666;text-align:right;padding:0 6px 0 5px;letter-spacing:-0.12px;">34</div>
<div class="td" style="left:629px;top:837.3px;width:40px;height:25px;background:#666666;text-align:right;padding:0 6px 0 5px;letter-spacing:-0.12px;">32188</div>
<div class="td" style="left:669px;top:837.3px;width:52px;height:25px;background:#666666;text-align:right;padding:0 6px 0 5px;letter-spacing:-0.12px;">57207</div>
<div class="td" style="left:721px;top:837.3px;width:58.4px;height:25px;background:#666666;text-align:right;padding:0 6px 0 5px;letter-spacing:-0.12px;">62</div>
<div class="td" style="left:779.4px;top:837.3px;width:67.2px;height:25px;background:#666666;padding-left:5px;letter-spacing:-1.3px;">SYS</div>
<div class="td" style="left:846.6px;top:837.3px;width:67.4px;height:25px;background:#666666;padding-left:5px;letter-spacing:-0.45px;">PL/SQL Developer</div>
<div class="td" style="left:914px;top:837.3px;width:93.3px;height:25px;background:#666666;padding-left:5px;letter-spacing:-0.1px;">plsqldev.exe</div>
<div class="td" style="left:1007.3px;top:837.3px;width:94.1px;height:25px;background:#666666;text-align:right;padding:0 6px 0 5px;letter-spacing:-0.12px;">0</div>
<div class="td" style="left:1101.4px;top:837.3px;width:98.6px;height:25px;background:#666666;text-align:right;padding:0 6px 0 5px;letter-spacing:-0.12px;">0</div>
<div class="td" style="left:1200px;top:837.3px;width:94px;height:25px;background:#666666;text-align:right;padding:0 6px 0 5px;letter-spacing:-0.12px;">0</div>
<div class="td" style="left:1294px;top:837.3px;width:94.2px;height:25px;background:#666666;text-align:right;padding:0 6px 0 5px;letter-spacing:-0.12px;">0</div>
<div class="td" style="left:1388.2px;top:837.3px;width:101.3px;height:25px;background:#666666;text-align:right;padding:0 6px 0 5px;letter-spacing:-0.12px;">60</div>
<div class="td" style="left:1489.5px;top:837.3px;width:88.5px;height:25px;background:#666666;padding-left:5px;letter-spacing:-0.2px;">SQL*Net message</div>
<div class="td" style="left:1578px;top:837.3px;width:94.3px;height:25px;background:#666666;padding-left:5px;letter-spacing:-0.7px;">WAITED SHORT</div>
<div class="td" style="left:1672.3px;top:837.3px;width:89.0px;height:25px;background:#666666;text-align:right;padding:0 6px 0 5px;letter-spacing:-0.12px;">59</div>
<div class="td" style="left:1761.3px;top:837.3px;width:223.5px;height:25px;background:#666666;padding-left:5px;letter-spacing:-0.62px;">SELECT * FROM X$DBGALERTEXT WHERE</div>
<div class="td" style="left:1984.8px;top:837.3px;width:97.3px;height:25px;background:#666666;padding-left:5px;">a773k74vnjmy8</div>
<div class="td" style="left:2082.1px;top:837.3px;width:72.4px;height:25px;background:#666666;padding-left:5px;letter-spacing:-0.12px;">927518664</div>
<div class="td" style="left:543.5px;top:862.2px;width:36.9px;height:25px;background:#545454;border-left:none;text-align:center;letter-spacing:-0.12px;">2</div>
<div class="td" style="left:580.4px;top:862.2px;width:48.6px;height:25px;background:#5b5b5b;text-align:right;padding:0 6px 0 5px;letter-spacing:-0.12px;">2294</div>
<div class="td" style="left:629px;top:862.2px;width:40px;height:25px;background:#5b5b5b;text-align:right;padding:0 6px 0 5px;letter-spacing:-0.12px;">35106</div>
<div class="td" style="left:669px;top:862.2px;width:52px;height:25px;background:#5b5b5b;text-align:right;padding:0 6px 0 5px;letter-spacing:-0.12px;">47747</div>
<div class="td" style="left:721px;top:862.2px;width:58.4px;height:25px;background:#5b5b5b;text-align:right;padding:0 6px 0 5px;letter-spacing:-0.12px;">17</div>
<div class="td" style="left:779.4px;top:862.2px;width:67.2px;height:25px;background:#5b5b5b;padding-left:5px;letter-spacing:-0.9px;">JENNIFER</div>
<div class="td" style="left:846.6px;top:862.2px;width:67.4px;height:25px;background:#5b5b5b;padding-left:5px;"></div>
<div class="td" style="left:914px;top:862.2px;width:93.3px;height:25px;background:#5b5b5b;padding-left:5px;letter-spacing:-0.32px;">JDBC Thin Client</div>
<div class="td" style="left:1007.3px;top:862.2px;width:94.1px;height:25px;background:#5b5b5b;text-align:right;padding:0 6px 0 5px;letter-spacing:-0.12px;">0</div>
<div class="td" style="left:1101.4px;top:862.2px;width:98.6px;height:25px;background:#5b5b5b;text-align:right;padding:0 6px 0 5px;letter-spacing:-0.12px;">0</div>
<div class="td" style="left:1200px;top:862.2px;width:94px;height:25px;background:#5b5b5b;text-align:right;padding:0 6px 0 5px;letter-spacing:-0.12px;">0</div>
<div class="td" style="left:1294px;top:862.2px;width:94.2px;height:25px;background:#5b5b5b;text-align:right;padding:0 6px 0 5px;letter-spacing:-0.12px;">0</div>
<div class="td" style="left:1388.2px;top:862.2px;width:101.3px;height:25px;background:#5b5b5b;text-align:right;padding:0 6px 0 5px;letter-spacing:-0.12px;">1</div>
<div class="td" style="left:1489.5px;top:862.2px;width:88.5px;height:25px;background:#5b5b5b;padding-left:5px;letter-spacing:0.15px;">direct path read</div>
<div class="td" style="left:1578px;top:862.2px;width:94.3px;height:25px;background:#5b5b5b;padding-left:5px;letter-spacing:-0.7px;">WAITED SHORT</div>
<div class="td" style="left:1672.3px;top:862.2px;width:89.0px;height:25px;background:#5b5b5b;text-align:right;padding:0 6px 0 5px;letter-spacing:-0.12px;">0</div>
<div class="td" style="left:1761.3px;top:862.2px;width:223.5px;height:25px;background:#5b5b5b;padding-left:5px;letter-spacing:-0.12px;">SELECT count(*) FROM stress.ffs_test2</div>
<div class="td" style="left:1984.8px;top:862.2px;width:97.3px;height:25px;background:#5b5b5b;padding-left:5px;">0nhj9t1861aa7</div>
<div class="td" style="left:2082.1px;top:862.2px;width:72.4px;height:25px;background:#5b5b5b;padding-left:5px;letter-spacing:-0.12px;">1348512071</div>
<div class="td" style="left:543.5px;top:887.1px;width:36.9px;height:25px;background:#5e5e5e;border-left:none;text-align:center;letter-spacing:-0.12px;">3</div>
<div class="td" style="left:580.4px;top:887.1px;width:48.6px;height:25px;background:#666666;text-align:right;padding:0 6px 0 5px;letter-spacing:-0.12px;">2302</div>
<div class="td" style="left:629px;top:887.1px;width:40px;height:25px;background:#666666;text-align:right;padding:0 6px 0 5px;letter-spacing:-0.12px;">42664</div>
<div class="td" style="left:669px;top:887.1px;width:52px;height:25px;background:#666666;text-align:right;padding:0 6px 0 5px;letter-spacing:-0.12px;">1051</div>
<div class="td" style="left:721px;top:887.1px;width:58.4px;height:25px;background:#666666;text-align:right;padding:0 6px 0 5px;letter-spacing:-0.12px;">15</div>
<div class="td" style="left:779.4px;top:887.1px;width:67.2px;height:25px;background:#666666;padding-left:5px;letter-spacing:-0.9px;">JENNIFER</div>
<div class="td" style="left:846.6px;top:887.1px;width:67.4px;height:25px;background:#666666;padding-left:5px;"></div>
<div class="td" style="left:914px;top:887.1px;width:93.3px;height:25px;background:#666666;padding-left:5px;letter-spacing:-0.32px;">JDBC Thin Client</div>
<div class="td" style="left:1007.3px;top:887.1px;width:94.1px;height:25px;background:#666666;text-align:right;padding:0 6px 0 5px;letter-spacing:-0.12px;">0</div>
<div class="td" style="left:1101.4px;top:887.1px;width:98.6px;height:25px;background:#666666;text-align:right;padding:0 6px 0 5px;letter-spacing:-0.12px;">0</div>
<div class="td" style="left:1200px;top:887.1px;width:94px;height:25px;background:#666666;text-align:right;padding:0 6px 0 5px;letter-spacing:-0.12px;">0</div>
<div class="td" style="left:1294px;top:887.1px;width:94.2px;height:25px;background:#666666;text-align:right;padding:0 6px 0 5px;letter-spacing:-0.12px;">0</div>
<div class="td" style="left:1388.2px;top:887.1px;width:101.3px;height:25px;background:#666666;text-align:right;padding:0 6px 0 5px;letter-spacing:-0.12px;">1</div>
<div class="td" style="left:1489.5px;top:887.1px;width:88.5px;height:25px;background:#666666;padding-left:5px;letter-spacing:0.15px;">direct path read</div>
<div class="td" style="left:1578px;top:887.1px;width:94.3px;height:25px;background:#666666;padding-left:5px;letter-spacing:-0.7px;">WAITED SHORT</div>
<div class="td" style="left:1672.3px;top:887.1px;width:89.0px;height:25px;background:#666666;text-align:right;padding:0 6px 0 5px;letter-spacing:-0.12px;">0</div>
<div class="td" style="left:1761.3px;top:887.1px;width:223.5px;height:25px;background:#666666;padding-left:5px;letter-spacing:-0.12px;">SELECT count(*) FROM stress.ffs_test2</div>
<div class="td" style="left:1984.8px;top:887.1px;width:97.3px;height:25px;background:#666666;padding-left:5px;">0nhj9t1861aa7</div>
<div class="td" style="left:2082.1px;top:887.1px;width:72.4px;height:25px;background:#666666;padding-left:5px;letter-spacing:-0.12px;">1348512071</div>
<div style="left:543.5px;top:1023.6px;width:1611px;height:10px;background:#2a2a2a;border-top:1px solid #242424"></div>
<div style="left:544px;top:1024.5px;width:430px;height:9px;background:#444;border-radius:4px"></div>
<svg style="left:533px;top:1040px" width="1637" height="100" viewBox="533 1040 1637 100" shape-rendering="crispEdges"><rect x="616" y="1098.6" width="1386" height="1" fill="#343434"/><rect x="616" y="1082.5" width="1386" height="1" fill="#343434"/><rect x="616" y="1066.5" width="1386" height="1" fill="#343434"/><rect x="616" y="1114.9" width="1405" height="1" fill="#343434"/><rect x="616" y="1050" width="1" height="65" fill="#333"/><rect x="616.10" y="1087.6" width="18.5" height="27.6" fill="#1c2c54"/><rect x="639.22" y="1087.6" width="18.5" height="27.6" fill="#405ba2"/><rect x="662.34" y="1087.6" width="18.5" height="27.6" fill="#405ba2"/><rect x="685.46" y="1096.8" width="18.5" height="18.4" fill="#405ba2"/><rect x="708.58" y="1096.8" width="18.5" height="18.4" fill="#405ba2"/><rect x="731.70" y="1096.8" width="18.5" height="18.4" fill="#405ba2"/><rect x="754.82" y="1096.8" width="18.5" height="18.4" fill="#405ba2"/><rect x="777.94" y="1106.0" width="18.5" height="9.2" fill="#405ba2"/><rect x="801.06" y="1087.6" width="18.5" height="27.6" fill="#405ba2"/><rect x="824.18" y="1078.4" width="18.5" height="36.8" fill="#405ba2"/><rect x="847.30" y="1060.1" width="18.5" height="55.1" fill="#405ba2"/><rect x="870.42" y="1060.1" width="18.5" height="55.1" fill="#405ba2"/><rect x="893.54" y="1069.2" width="18.5" height="45.9" fill="#405ba2"/><rect x="893.54" y="1106.0" width="18.5" height="9.2" fill="#3ea2f0"/><rect x="916.66" y="1078.4" width="18.5" height="36.8" fill="#405ba2"/><rect x="939.78" y="1078.4" width="18.5" height="36.8" fill="#405ba2"/><rect x="962.90" y="1078.4" width="18.5" height="36.8" fill="#405ba2"/><rect x="986.02" y="1087.6" width="18.5" height="27.6" fill="#405ba2"/><rect x="1009.14" y="1087.6" width="18.5" height="27.6" fill="#405ba2"/><rect x="1032.26" y="1096.8" width="18.5" height="18.4" fill="#405ba2"/><rect x="1055.38" y="1078.4" width="18.5" height="36.8" fill="#405ba2"/><rect x="1078.50" y="1060.1" width="18.5" height="55.1" fill="#405ba2"/><rect x="1101.62" y="1060.1" width="18.5" height="55.1" fill="#405ba2"/><rect x="1124.74" y="1060.1" width="18.5" height="55.1" fill="#405ba2"/><rect x="1147.86" y="1050.9" width="18.5" height="64.3" fill="#405ba2"/><rect x="1170.98" y="1060.1" width="18.5" height="55.1" fill="#405ba2"/><rect x="1170.98" y="1106.0" width="18.5" height="9.2" fill="#ffd800"/><rect x="1194.10" y="1078.4" width="18.5" height="36.8" fill="#405ba2"/><rect x="1217.22" y="1087.6" width="18.5" height="27.6" fill="#405ba2"/><rect x="1240.34" y="1106.0" width="18.5" height="9.2" fill="#405ba2"/><rect x="1263.46" y="1106.0" width="18.5" height="9.2" fill="#405ba2"/><rect x="1286.58" y="1106.0" width="18.5" height="9.2" fill="#405ba2"/><rect x="1309.70" y="1106.0" width="18.5" height="9.2" fill="#405ba2"/><rect x="1332.82" y="1106.0" width="18.5" height="9.2" fill="#405ba2"/><rect x="1355.94" y="1106.0" width="18.5" height="9.2" fill="#405ba2"/><rect x="1379.06" y="1106.0" width="18.5" height="9.2" fill="#405ba2"/><rect x="1402.18" y="1106.0" width="18.5" height="9.2" fill="#405ba2"/><rect x="1425.30" y="1096.8" width="18.5" height="18.4" fill="#405ba2"/><rect x="1448.42" y="1096.8" width="18.5" height="18.4" fill="#405ba2"/><rect x="1471.54" y="1106.0" width="18.5" height="9.2" fill="#405ba2"/><rect x="1494.66" y="1106.0" width="18.5" height="9.2" fill="#405ba2"/><rect x="1517.78" y="1106.0" width="18.5" height="9.2" fill="#405ba2"/><rect x="1540.90" y="1106.0" width="18.5" height="9.2" fill="#405ba2"/><rect x="1564.02" y="1106.0" width="18.5" height="9.2" fill="#405ba2"/><rect x="1587.14" y="1106.0" width="18.5" height="9.2" fill="#405ba2"/><rect x="1610.26" y="1106.0" width="18.5" height="9.2" fill="#405ba2"/><rect x="1633.38" y="1106.0" width="18.5" height="9.2" fill="#405ba2"/><rect x="1656.50" y="1106.0" width="18.5" height="9.2" fill="#405ba2"/><rect x="1679.62" y="1106.0" width="18.5" height="9.2" fill="#405ba2"/><rect x="1702.74" y="1106.0" width="18.5" height="9.2" fill="#405ba2"/><rect x="1725.86" y="1096.8" width="18.5" height="18.4" fill="#405ba2"/><rect x="1748.98" y="1096.8" width="18.5" height="18.4" fill="#405ba2"/><rect x="1772.10" y="1106.0" width="18.5" height="9.2" fill="#405ba2"/><rect x="1795.22" y="1106.0" width="18.5" height="9.2" fill="#405ba2"/><rect x="1818.34" y="1087.6" width="18.5" height="27.6" fill="#405ba2"/><rect x="1818.34" y="1106.0" width="18.5" height="9.2" fill="#ffd800"/><rect x="1841.46" y="1096.8" width="18.5" height="18.4" fill="#405ba2"/><rect x="1864.58" y="1087.6" width="18.5" height="27.6" fill="#405ba2"/><rect x="1887.70" y="1087.6" width="18.5" height="27.6" fill="#405ba2"/><rect x="1910.82" y="1087.6" width="18.5" height="27.6" fill="#405ba2"/><rect x="1933.94" y="1106.0" width="18.5" height="9.2" fill="#405ba2"/><rect x="1957.06" y="1096.8" width="18.5" height="18.4" fill="#405ba2"/><rect x="1980.18" y="1096.8" width="18.5" height="18.4" fill="#405ba2"/><rect x="624.0" y="1050.6" width="2.6" height="64.6" fill="#a82a30"/></svg>
<div class="t r" style="left:307px;top:1040px;width:300px;font-size:11.3px;color:#f2f2f2;letter-spacing:0px">7</div>
<div class="t r" style="left:307px;top:1056.3px;width:300px;font-size:11.3px;color:#f2f2f2;letter-spacing:0px">5.25</div>
<div class="t r" style="left:307px;top:1072.3px;width:300px;font-size:11.3px;color:#f2f2f2;letter-spacing:0px">3.5</div>
<div class="t r" style="left:307px;top:1088.6px;width:300px;font-size:11.3px;color:#f2f2f2;letter-spacing:0px">1.75</div>
<div class="t r" style="left:307px;top:1104.5px;width:300px;font-size:11.3px;color:#f2f2f2;letter-spacing:0px">0</div>
<div class="t c" style="left:475.29999999999995px;top:1119px;width:300px;font-size:12px;color:#f2f2f2;letter-spacing:-0.1px">00</div>
<div class="t c" style="left:937.5px;top:1119px;width:300px;font-size:12px;color:#f2f2f2;letter-spacing:-0.1px">20</div>
<div class="t c" style="left:1399.5px;top:1119px;width:300px;font-size:12px;color:#f2f2f2;letter-spacing:-0.1px">40</div>
<div class="t c" style="left:1839px;top:1119px;width:300px;font-size:12px;color:#f2f2f2;letter-spacing:-0.1px">59</div>
<div class="t c" style="left:450px;top:1076px;width:200px;transform:rotate(-90deg);font-size:11px;color:#e8e8e8;letter-spacing:-0.1px">Act Session</div>
</body></html>
